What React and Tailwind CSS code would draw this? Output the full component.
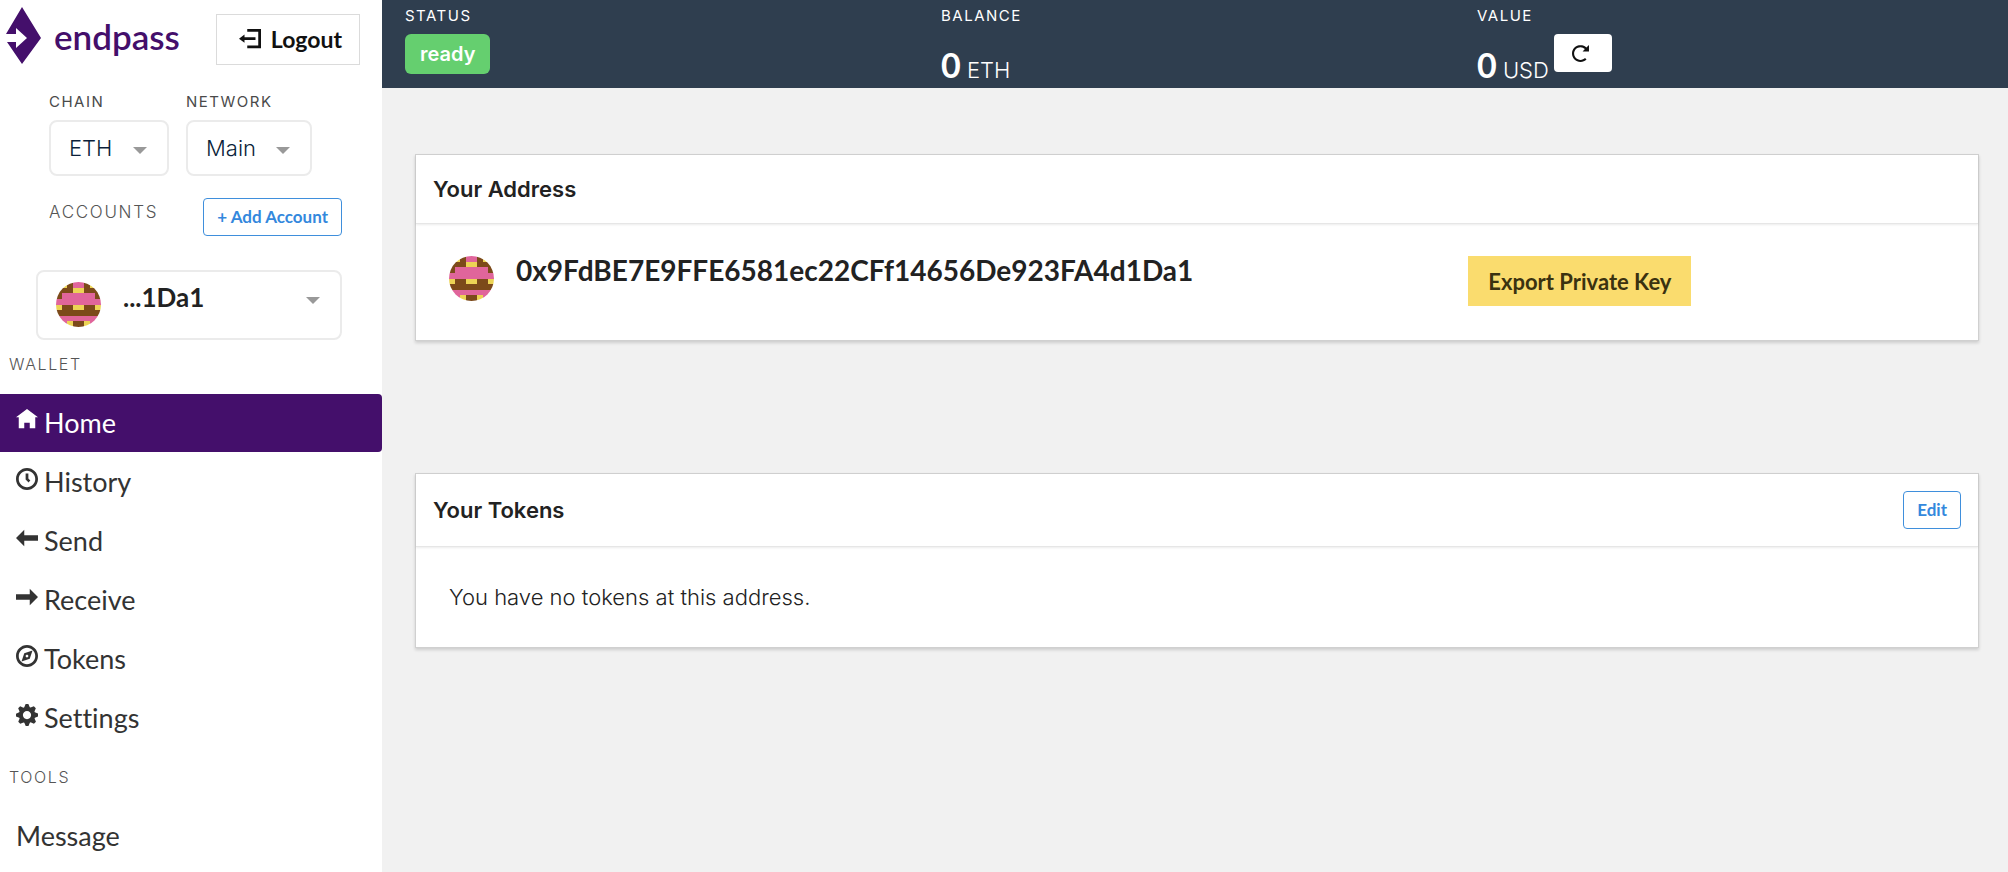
import React, { useState } from 'react';

// 8x8 icon set
const ICONS = {
  home: 'M4 0l-4 3h1v4h2v-2h2v2h2v-4.03l1 .03-4-3z',
  clock: 'M4 0c-2.2 0-4 1.8-4 4s1.8 4 4 4 4-1.8 4-4-1.8-4-4-4zm0 1c1.66 0 3 1.34 3 3s-1.34 3-3 3-3-1.34-3-3 1.34-3 3-3zm-.5 1v2.22l.16.13.5.5.34.38.72-.72-.38-.34-.34-.34v-1.81h-1z',
  arrowLeft: 'M3 1l-3 3.03 3 2.97v-2h5v-2h-5v-2z',
  arrowRight: 'M5 1v2h-5v2h5v2l3-3.03-3-2.97z',
  compass: 'M4 0c-2.2 0-4 1.8-4 4s1.8 4 4 4 4-1.8 4-4-1.8-4-4-4zm0 1c1.66 0 3 1.34 3 3s-1.34 3-3 3-3-1.34-3-3 1.34-3 3-3zm2 1l-3 1-1 3 3-1 1-3zm-2 1.5c.28 0 .5.22.5.5s-.22.5-.5.5-.5-.22-.5-.5.22-.5.5-.5z',
  cog: 'M3.5 0l-.5 1.19-.3.13-1.19-.5-.72.72.5 1.19-.13.3-1.16.47v1l1.19.5.13.3-.5 1.19.72.72 1.19-.5.3.13.5 1.16h1l.5-1.19.28-.13 1.22.5.72-.72-.5-1.19.13-.3 1.15-.47v-1l-1.19-.5-.13-.28.5-1.22-.72-.72-1.19.5-.3-.13-.5-1.13h-1zm.5 2.5c.83 0 1.5.67 1.5 1.5s-.67 1.5-1.5 1.5-1.5-.67-1.5-1.5.67-1.5 1.5-1.5z',
  reload: 'M4 0c-2.2 0-4 1.8-4 4s1.8 4 4 4c1.1 0 2.12-.43 2.84-1.16l-.72-.72c-.54.54-1.29.88-2.13.88-1.66 0-3-1.34-3-3s1.34-3 3-3c.83 0 1.55.36 2.09.91l-1.09 1.09h3v-3l-1.19 1.19c-.72-.72-1.71-1.19-2.81-1.19z',
  logout: 'M3 0v1h4v5h-4v1h5v-7h-5zm-1 2l-2 1.5 2 1.5v-1h4v-1h-4v-1z',
};

const WALLET_LINKS = [
  { label: 'Home', icon: 'home', active: true },
  { label: 'History', icon: 'clock' },
  { label: 'Send', icon: 'arrowLeft' },
  { label: 'Receive', icon: 'arrowRight' },
  { label: 'Tokens', icon: 'compass' },
  { label: 'Settings', icon: 'cog' },
];

const ADDRESS = '0x9FdBE7E9FFE6581ec22CFf14656De923FA4d1Da1';

// p = pink, b = brown, y = yellow
const AVATAR_ROWS = [
  'pybppbyp',
  'bbbyybbb',
  'bppppppb',
  'pppppppp',
  'ybbyybby',
  'bbbbbbbb',
  'pppppppp',
  'ppybbypp',
];
const AVATAR_COLORS = { p: '#e0659b', b: '#7c4a1a', y: '#ecd455' };

function Icon({ name, className }) {
  return (
    <svg viewBox="0 0 8 8" className={className} fill="currentColor" aria-hidden="true">
      <path d={ICONS[name]} />
    </svg>
  );
}

function Avatar() {
  return (
    <svg viewBox="0 0 8 8" className="w-[45px] h-[45px] rounded-full shrink-0" shapeRendering="crispEdges" aria-hidden="true">
      {AVATAR_ROWS.map((row, y) =>
        row.split('').map((c, x) => (
          <rect key={`${x}-${y}`} x={x} y={y} width="1" height="1" fill={AVATAR_COLORS[c]} />
        ))
      )}
    </svg>
  );
}

function Caret({ className }) {
  return (
    <svg viewBox="0 0 14 7" className={`w-[14px] h-[7px] pointer-events-none ${className}`} fill="#999" aria-hidden="true">
      <path d="M0 0h14L7 7z" />
    </svg>
  );
}

function SmallSelect({ id, label, value, className }) {
  return (
    <div className={className}>
      <label htmlFor={id} className="block text-[15px] leading-6 tracking-widest text-[#4a4a4a]">{label}</label>
      <div className="relative mt-1.5">
        <select
          id={id}
          className="appearance-none block w-full h-14 pl-[18px] rounded-lg border-2 border-[#ebebeb] bg-white text-[22px] font-light text-[#0b1f3a]"
        >
          <option>{value}</option>
        </select>
        <Caret className="absolute right-[22px] top-[27px]" />
      </div>
    </div>
  );
}

function Sidebar() {
  return (
    <aside className="w-[382px] shrink-0 bg-white">
      <div className="flex items-end justify-between pl-1.5 pr-[22px] pt-[7px]">
        <a href="#home" className="flex items-center gap-[13px] text-[#440f6b]">
          <svg viewBox="0 0 35 58" className="w-[35px] h-[58px]" fill="currentColor" aria-hidden="true">
            <path d="M16 0L35 31 16 57 1 35H10v6L21 31 10 21v6H0z" />
          </svg>
          <span className="font-[Lato] font-semibold text-[35px] leading-10">endpass</span>
        </a>
        <button className="flex items-center gap-2.5 h-[51px] pl-[22px] pr-[17px] border border-[#dbdbdb] font-[Lato] font-bold text-[23px] text-[#111]">
          <Icon name="logout" className="w-[22px] h-[22px]" />
          Logout
        </button>
      </div>

      <div className="flex gap-[17px] pl-[49px] pt-[25px]">
        <SmallSelect id="chain" label="CHAIN" value="ETH" className="w-[120px]" />
        <SmallSelect id="network" label="NETWORK" value="Main" className="w-[126px]" />
      </div>

      <div className="flex items-start justify-between pl-[49px] pr-10 pt-[22px]">
        <label htmlFor="account" className="text-[17px] leading-7 tracking-widest font-light text-[#555]">ACCOUNTS</label>
        <button className="h-[38px] px-[13px] rounded-sm border border-[#3f8fdc] font-[Lato] font-bold text-[17px] text-[#3388dd]">
          + Add Account
        </button>
      </div>

      <div className="relative mt-[34px] ml-9 mr-10 h-[70px]">
        <select
          id="account"
          className="appearance-none block w-full h-full pl-[85px] pb-4 rounded-lg border-2 border-[#ebebeb] bg-white font-[Lato] font-bold text-[26px] text-[#222]"
        >
          <option>...1Da1</option>
        </select>
        <div className="absolute left-5 top-3 pointer-events-none"><Avatar /></div>
        <Caret className="absolute right-[22px] top-[27px]" />
      </div>

      <nav className="font-[Lato] text-[#333] [font-variant-ligatures:none]">
        <p className="pl-[9px] pt-3 pb-[18px] font-[Inter] text-base leading-6 tracking-widest font-light text-[#555]">WALLET</p>
        <ul className="space-y-px">
          {WALLET_LINKS.map((link) => (
            <li key={link.label}>
              <a
                href={`#${link.label.toLowerCase()}`}
                className={`flex items-center h-[58px] pl-4 gap-1.5 text-[27px] rounded-r-sm ${
                  link.active ? 'bg-[#440f6b] text-white' : ''
                }`}
              >
                <Icon name={link.icon} className="w-[22px] h-[22px] mb-1.5" />
                {link.label}
              </a>
            </li>
          ))}
        </ul>
        <p className="pl-[9px] pt-[18px] pb-[18px] font-[Inter] text-base leading-6 tracking-widest font-light text-[#555]">TOOLS</p>
        <a href="#message" className="flex items-center h-[58px] pl-4 text-[27px]">Message</a>
      </nav>
    </aside>
  );
}

function StatusBar() {
  return (
    <header className="grid grid-cols-3 h-[88px] px-[9px] bg-[#2f3e4f] text-white">
      <div className="px-[14px] pt-1">
        <p className="text-[15px] leading-6 tracking-widest">STATUS</p>
        <span className="inline-flex items-center mt-1.5 h-10 px-[15px] rounded-md bg-[#65cf6f] font-semibold text-xl text-white">
          ready
        </span>
      </div>
      <div className="px-[14px] pt-1">
        <p className="text-[15px] leading-6 tracking-widest">BALANCE</p>
        <p className="mt-[21px] text-[22px] leading-8 font-light">
          <span className="font-[Lato] font-bold text-[34px]">0</span> ETH
        </p>
      </div>
      <div className="px-[14px] pt-1">
        <p className="text-[15px] leading-6 tracking-widest">VALUE</p>
        <div className="flex items-start gap-[5px]">
          <p className="mt-[21px] text-[22px] leading-8 font-light">
            <span className="font-[Lato] font-bold text-[34px]">0</span> USD
          </p>
          <button aria-label="Refresh" className="flex items-center mt-1.5 w-[58px] h-[38px] pl-[18px] rounded-sm bg-white text-[#111]">
            <Icon name="reload" className="w-[17px] h-[17px]" />
          </button>
        </div>
      </div>
    </header>
  );
}

function Card({ title, action, children, className }) {
  return (
    <section className={`bg-white border border-[#d0d0d0] shadow-[0_2px_3px_rgba(10,10,10,0.15)] ${className || ''}`}>
      <div className="flex items-center justify-between px-[17px] py-[17px] border-b border-[#e6e6e6] shadow-[0_1px_2px_rgba(10,10,10,0.08)]">
        <h2 className="text-[22px] leading-[34px] font-semibold text-[#222]">{title}</h2>
        {action}
      </div>
      {children}
    </section>
  );
}

export default function App() {
  const [address] = useState(ADDRESS);

  return (
    <div className="flex min-h-screen bg-[#f1f1f1] font-[Inter]">
      <Sidebar />
      <div className="flex-1 min-w-0">
        <StatusBar />
        <main className="pl-[33px] pr-[29px] pt-[66px]">
          <Card title="Your Address">
            <div className="grid grid-cols-3 px-[33px] pt-8 pb-[34px]">
              <div className="col-span-2 flex items-start gap-[22px]">
                <Avatar />
                <p className="font-[Lato] font-bold text-[28px] leading-7 text-[#222]">{address}</p>
              </div>
              <div className="pl-[22px]">
                <button className="h-[50px] px-5 bg-[#fadc6e] font-[Lato] font-bold text-[22px] text-[#3a3210]">
                  Export Private Key
                </button>
              </div>
            </div>
          </Card>

          <Card
            title="Your Tokens"
            className="mt-[132px]"
            action={
              <button className="h-[38px] px-[13px] rounded-sm border border-[#3f8fdc] font-[Lato] font-bold text-[17px] text-[#3388dd]">
                Edit
              </button>
            }
          >
            <p className="px-[33px] py-8 text-[22px] leading-9 font-light text-[#222]">
              You have no tokens at this address.
            </p>
          </Card>
        </main>
      </div>
    </div>
  );
}
